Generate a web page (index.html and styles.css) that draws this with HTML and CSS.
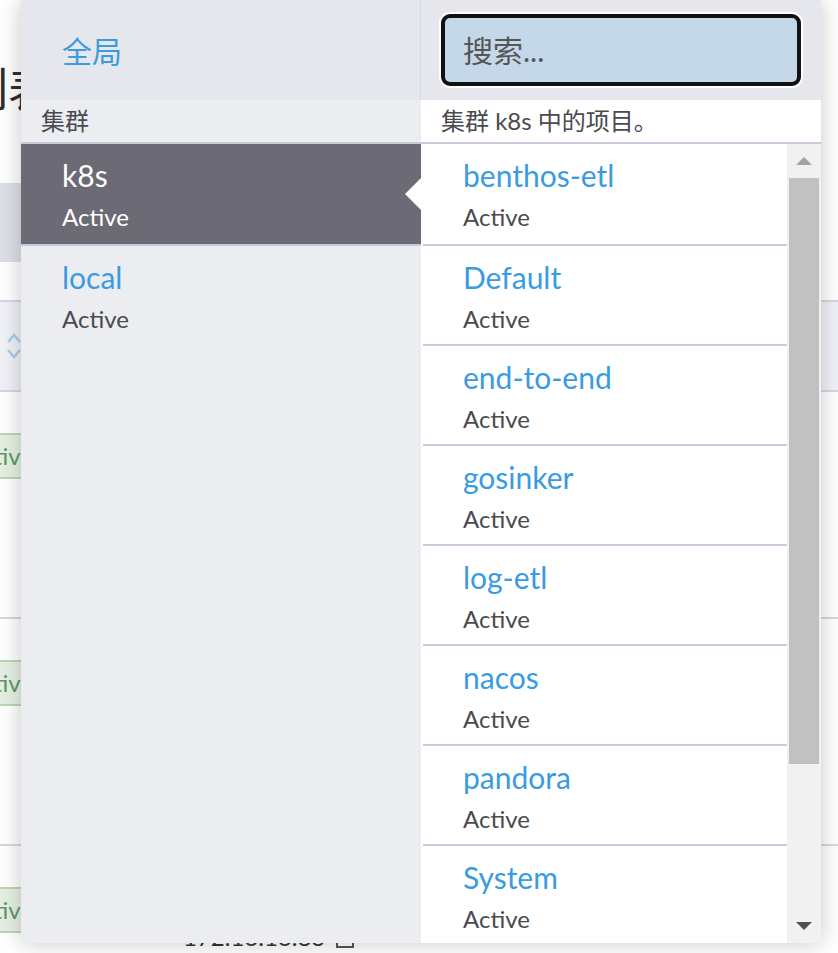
FILE: index.html
```html
<!DOCTYPE html>
<html lang="zh">
<head>
<meta charset="utf-8">
<title>集群</title>
<link rel="stylesheet" href="styles.css">
</head>
<body>
<div class="page">
  <div class="pg-head"><h1 class="pg-title">列表</h1></div>
  <div class="pg-band"></div>
  <div class="pg-gap"></div>
  <div class="pg-thead">
    <svg class="sort" width="14" height="28" viewBox="0 0 14 28"><path d="M1 10 L7 3 L13 10" fill="none" stroke="#a9cdea" stroke-width="2.5"/><path d="M1 18 L7 25 L13 18" fill="none" stroke="#a9cdea" stroke-width="2.5"/></svg>
  </div>
  <div class="pg-row">
    <div class="pg-cell-status"><span class="badge">Active</span></div>
    <div class="pg-cell-ip">172.16.16.81</div>
  </div>
  <div class="pg-row">
    <div class="pg-cell-status"><span class="badge">Active</span></div>
    <div class="pg-cell-ip">172.16.16.82</div>
  </div>
  <div class="pg-row">
    <div class="pg-cell-status"><span class="badge">Active</span></div>
    <div class="pg-cell-ip">172.16.16.83 <svg class="copy" width="20" height="22" viewBox="0 0 20 22"><rect x="2" y="4" width="16" height="17" fill="#fff" stroke="#555" stroke-width="2"/><rect x="6" y="1" width="8" height="5" fill="#555"/><path d="M5 11h10M5 15h10" stroke="#777" stroke-width="1.5"/></svg></div>
  </div>
</div>

<div class="dd">
  <div class="dd-col dd-left">
    <div class="dd-top"><a class="dd-global">全局</a></div>
    <div class="dd-label">集群</div>
    <ul class="dd-list">
      <li class="dd-item active"><div class="name">k8s</div><div class="state">Active</div></li>
      <li class="dd-item"><div class="name">local</div><div class="state">Active</div></li>
    </ul>
  </div>
  <div class="dd-col dd-right">
    <div class="dd-top"><input class="search" type="text" placeholder="搜索..."></div>
    <div class="dd-label">集群 k8s 中的项目。</div>
    <div class="dd-body">
      <ul class="dd-list">
        <li class="dd-item"><div class="name">benthos-etl</div><div class="state">Active</div></li>
        <li class="dd-item"><div class="name">Default</div><div class="state">Active</div></li>
        <li class="dd-item"><div class="name">end-to-end</div><div class="state">Active</div></li>
        <li class="dd-item"><div class="name">gosinker</div><div class="state">Active</div></li>
        <li class="dd-item"><div class="name">log-etl</div><div class="state">Active</div></li>
        <li class="dd-item"><div class="name">nacos</div><div class="state">Active</div></li>
        <li class="dd-item"><div class="name">pandora</div><div class="state">Active</div></li>
        <li class="dd-item"><div class="name">System</div><div class="state">Active</div></li>
      </ul>
      <div class="sb">
        <div class="sb-btn"><span class="tri-up"></span></div>
        <div class="sb-thumb"></div>
        <div class="sb-fill"></div>
        <div class="sb-btn"><span class="tri-down"></span></div>
      </div>
    </div>
  </div>
</div>
</body>
</html>
```

FILE: styles.css
```css
html, body {
  margin: 0;
  padding: 0;
}
body {
  position: relative;
  width: 838px;
  height: 953px;
  overflow: hidden;
  background: #fff;
  font-family: Lato, "Noto Sans CJK SC", sans-serif;
  color: #4a4a4f;
}

/* background page */
.pg-head {
  height: 183px;
  padding-top: 60px;
  box-sizing: border-box;
  overflow: hidden;
}
.pg-title {
  margin: 0 0 0 -38px;
  font-size: 46px;
  line-height: 52px;
  font-weight: 400;
  color: #2f2f33;
  white-space: nowrap;
  font-family: "Noto Sans CJK SC", sans-serif;
}
.pg-band {
  height: 79px;
  width: 300px;
  background: #dcdfe4;
}
.pg-gap {
  height: 38px;
}
.pg-thead {
  height: 92px;
  box-sizing: border-box;
  border-top: 2px solid #d5d8e2;
  border-bottom: 2px solid #d5d8e2;
  background: #f1f2f7;
  display: flex;
  align-items: center;
  padding-left: 7px;
}
.pg-row {
  height: 227px;
  box-sizing: border-box;
  border-bottom: 2px solid #d5d8e2;
  display: grid;
  grid-template-columns: 183px 1fr;
  align-items: start;
}
.pg-cell-status {
  padding-top: 41px;
}
.badge {
  display: inline-block;
  margin-left: -48px;
  height: 46px;
  box-sizing: border-box;
  padding: 0 12px;
  line-height: 42px;
  font-size: 24px;
  color: #5a9a6a;
  background: #e6f0e2;
  border: 2px solid #bcd6b4;
  border-radius: 4px;
}
.pg-cell-ip {
  padding-top: 76px;
  font-size: 24px;
  line-height: 29px;
  color: #333;
  display: flex;
  align-items: center;
  gap: 10px;
}

/* dropdown */
.dd {
  position: absolute;
  left: 21px;
  top: 0;
  width: 800px;
  height: 943px;
  display: grid;
  grid-template-columns: 400px 400px;
  box-shadow: 0 0 22px rgba(0, 0, 0, 0.22);
  overflow: hidden;
}
.dd-col {
  display: flex;
  flex-direction: column;
  min-height: 0;
}
.dd-left {
  background: #ecedf1;
}
.dd-right {
  background: #fff;
}
.dd-top {
  flex: none;
  height: 100px;
  box-sizing: border-box;
  background: #e6e7ed;
}
.dd-left .dd-top {
  border-right: 1px solid #d9dbe3;
  display: flex;
  align-items: center;
  padding-left: 41px;
}
.dd-global {
  font-size: 30px;
  color: #3a9be0;
  font-family: "Noto Sans CJK SC", sans-serif;
}
.dd-right .dd-top {
  padding: 14px 20px;
}
.search {
  display: block;
  width: 100%;
  height: 72px;
  box-sizing: border-box;
  border: 4px solid #111;
  border-radius: 9px;
  background: #c5d8ea;
  box-shadow: 0 0 0 2px #fff;
  padding: 0 0 0 18px;
  font-size: 30px;
  font-family: Lato, "Noto Sans CJK SC", sans-serif;
  color: #333;
  outline: none;
}
.search::placeholder {
  color: #555;
}
.dd-label {
  flex: none;
  height: 44px;
  box-sizing: border-box;
  border-bottom: 2px solid #c8cbd9;
  padding-left: 20px;
  font-size: 24px;
  line-height: 42px;
  color: #4a4a4f;
  white-space: nowrap;
}
.dd-list {
  list-style: none;
  margin: 0;
  padding: 0;
}
.dd-item {
  height: 100px;
  box-sizing: border-box;
  padding: 13px 0 0 41px;
}
.dd-item + .dd-item {
  border-top: 2px solid #c8cbd9;
}
.name {
  font-size: 30px;
  line-height: 36px;
  color: #3a9be0;
}
.state {
  font-size: 24px;
  line-height: 29px;
  margin-top: 9px;
  color: #4a4a4f;
}
.dd-item.active {
  position: relative;
  background: #6c6b75;
}
.dd-item.active .name,
.dd-item.active .state {
  color: #fff;
}
.dd-item.active::after {
  content: "";
  position: absolute;
  right: 0;
  top: 34px;
  border-style: solid;
  border-width: 16px 16px 16px 0;
  border-color: transparent #fff transparent transparent;
}
.dd-body {
  flex: 1;
  display: flex;
  min-height: 0;
}
.dd-right .dd-list {
  flex: 1;
  margin-left: 2px;
  overflow: hidden;
}
.dd-right .dd-item {
  padding-left: 40px;
}
.sb {
  flex: none;
  width: 34px;
  background: #f1f1f1;
  display: flex;
  flex-direction: column;
}
.sb-btn {
  height: 34px;
  display: flex;
  align-items: center;
  justify-content: center;
}
.tri-up {
  width: 0;
  height: 0;
  border-style: solid;
  border-width: 0 8px 8px 8px;
  border-color: transparent transparent #a3a3a3 transparent;
}
.tri-down {
  width: 0;
  height: 0;
  border-style: solid;
  border-width: 8px 8px 0 8px;
  border-color: #505050 transparent transparent transparent;
}
.sb-thumb {
  height: 586px;
  margin: 0 2px;
  background: #c1c1c1;
}
.sb-fill {
  flex: 1;
}
```
